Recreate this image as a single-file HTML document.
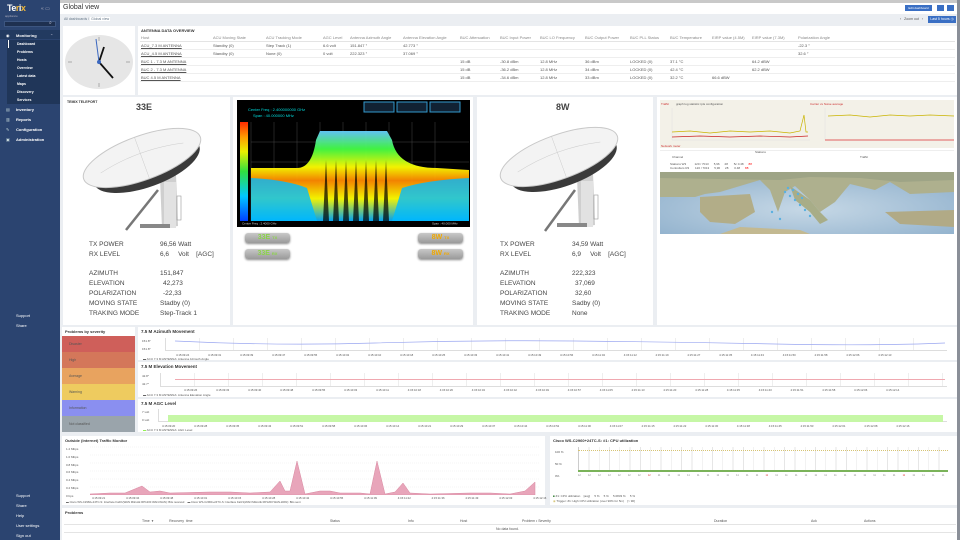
<!DOCTYPE html>
<html><head><meta charset="utf-8"><style>
*{margin:0;padding:0;box-sizing:border-box}
body{width:960px;height:540px;overflow:hidden;background:#ebeef2;font-family:"Liberation Sans",sans-serif;color:#1f2c33;position:relative}
.a{position:absolute}
.p{position:absolute;background:#fff}
.t{position:absolute;font-size:4px;color:#555;white-space:nowrap}
.sb{left:0;top:0;width:60px;height:540px;background:#2b4470}
.nav{position:absolute;left:16px;font-size:4px;color:#fff;font-weight:bold;white-space:nowrap}
.sub{position:absolute;left:7px;width:53px;height:8px;background:#203659;font-size:3.5px;color:#fff;padding:2px 0 0 10px;font-weight:bold}
.lbl{position:absolute;font-size:6.5px;color:#444;white-space:nowrap}
.btn{position:absolute;height:10px;border-radius:3px;background:linear-gradient(#c8c8c8,#9a9a9a);box-shadow:0 1px 2px #888;font-size:7px;font-weight:bold;text-align:center;line-height:10px}
.sev{position:absolute;left:62px;width:73px;height:16px;font-size:3.5px;color:#555;padding:6px 0 0 7px}
.ct{position:absolute;font-size:4.5px;font-weight:bold;color:#333;white-space:nowrap}
</style></head><body>
<div class="a" style="left:0;top:0;width:960px;height:3px;background:#c9c9c9"></div>
<div class="a sb"></div>
<div class="a" style="left:7px;top:3px;font-size:9px;font-weight:bold;color:#fff;letter-spacing:-.5px">Te<span style="color:#f0b83a">r</span>i<span style="color:#f0b83a">x</span></div>
<div class="a" style="left:5px;top:14px;font-size:3px;color:#aab">appliance</div>
<div class="a" style="left:41px;top:6px;font-size:5px;color:#aab">« ▭</div>
<div class="a" style="left:4px;top:21px;width:52px;height:6px;background:#1e3050;border:1px solid #3c5580"></div>
<div class="a" style="left:49px;top:20px;font-size:5px;color:#ccd">⌕</div>
<div class="a" style="left:0;top:30px;width:60px;height:9px;background:#223a60"></div>
<div class="nav" style="top:33px">Monitoring</div><div class="a" style="left:6px;top:33px;font-size:4px;color:#fff">◉</div>
<div class="a" style="left:50px;top:33px;font-size:4px;color:#ccd">⌃</div>
<div class="sub" style="top:40px">Dashboard</div><div class="a" style="left:8px;top:40px;width:1px;height:8px;background:#fff"></div>
<div class="sub" style="top:48px">Problems</div>
<div class="sub" style="top:56px">Hosts</div>
<div class="sub" style="top:64px">Overview</div>
<div class="sub" style="top:72px">Latest data</div>
<div class="sub" style="top:80px">Maps</div>
<div class="sub" style="top:88px">Discovery</div>
<div class="sub" style="top:96px">Services</div>
<div class="nav" style="top:107px">Inventory</div><div class="a" style="left:6px;top:107px;font-size:4px;color:#cdd">▤</div>
<div class="nav" style="top:117px">Reports</div><div class="a" style="left:6px;top:117px;font-size:4px;color:#cdd">▥</div>
<div class="nav" style="top:127px">Configuration</div><div class="a" style="left:6px;top:127px;font-size:4px;color:#cdd">✎</div>
<div class="nav" style="top:137px">Administration</div><div class="a" style="left:6px;top:137px;font-size:4px;color:#cdd">▣</div>
<div class="nav" style="top:313px;font-weight:normal">Support</div>
<div class="nav" style="top:323px;font-weight:normal">Share</div>
<div class="nav" style="top:493px;font-weight:normal">Support</div>
<div class="nav" style="top:503px;font-weight:normal">Share</div>
<div class="nav" style="top:513px;font-weight:normal">Help</div>
<div class="nav" style="top:523px;font-weight:normal">User settings</div>
<div class="nav" style="top:533px;font-weight:normal">Sign out</div>

<div class="a" style="left:60px;top:3px;width:900px;height:11px;background:#fff"></div>
<div class="a" style="left:63px;top:4px;font-size:7px;color:#333">Global view</div>
<div class="a" style="left:905px;top:5px;width:27px;height:6px;background:#3a6fc4;font-size:3px;color:#fff;text-align:center;line-height:6px">Edit dashboard</div>
<div class="a" style="left:937px;top:5px;width:7px;height:6px;background:#3a6fc4"></div>
<div class="a" style="left:947px;top:5px;width:7px;height:6px;background:#3a6fc4"></div>
<div class="a" style="left:64px;top:17px;font-size:3.5px;color:#678">All dashboards / <span style="background:#fff;padding:0 1px">Global view</span></div>
<div class="a" style="left:900px;top:17px;font-size:3.5px;color:#555">‹ &nbsp; Zoom out &nbsp; ›</div>
<div class="a" style="left:928px;top:16px;width:28px;height:7px;background:#3a6fc4;font-size:3.5px;color:#fff;text-align:center;line-height:7px">Last 5 hours ◷</div>

<!-- clock -->
<div class="p" style="left:63px;top:26px;width:72px;height:69px"></div>
<svg class="a" style="left:63px;top:26px" width="72" height="69" viewBox="0 0 72 69">
<ellipse cx="36" cy="36" rx="34" ry="27" fill="#e6e6e6"/>
<g stroke="#aaa" stroke-width="1"><line x1="36" y1="11" x2="36" y2="15"/><line x1="36" y1="57" x2="36" y2="61"/><line x1="5" y1="36" x2="9" y2="36"/><line x1="63" y1="36" x2="67" y2="36"/></g>
<line x1="36" y1="36" x2="33" y2="13" stroke="#3b68c0" stroke-width="1"/>
<line x1="36" y1="36" x2="41" y2="21" stroke="#111" stroke-width="1.8"/>
<line x1="36" y1="36" x2="50" y2="52" stroke="#111" stroke-width="1.8"/>
<circle cx="36" cy="36" r="2" fill="#3b68c0"/></svg>

<!-- table -->
<div class="p" style="left:138px;top:26px;width:820px;height:69px"></div>
<div class="a" style="left:141px;top:28px;font-size:4px;font-weight:bold;color:#333">ANTENNA DATA OVERVIEW</div>
<div class="t" style="left:141px;top:35px;color:#888">Host</div><div class="t" style="left:213px;top:35px;color:#888">ACU Moving State</div><div class="t" style="left:266px;top:35px;color:#888">ACU Tracking Mode</div><div class="t" style="left:323px;top:35px;color:#888">AGC Level</div><div class="t" style="left:350px;top:35px;color:#888">Antenna Azimuth Angle</div><div class="t" style="left:403px;top:35px;color:#888">Antenna Elevation Angle</div><div class="t" style="left:460px;top:35px;color:#888">BUC Attenuation</div><div class="t" style="left:500px;top:35px;color:#888">BUC Input Power</div><div class="t" style="left:540px;top:35px;color:#888">BUC LO Frequency</div><div class="t" style="left:585px;top:35px;color:#888">BUC Output Power</div><div class="t" style="left:630px;top:35px;color:#888">BUC PLL Status</div><div class="t" style="left:670px;top:35px;color:#888">BUC Temperature</div><div class="t" style="left:712px;top:35px;color:#888">EIRP value (4.5M)</div><div class="t" style="left:752px;top:35px;color:#888">EIRP value (7.3M)</div><div class="t" style="left:798px;top:35px;color:#888">Polarization Angle</div>
<div class="a" style="left:140px;top:41px;width:815px;height:1px;background:#e4e4e4"></div>
<div class="a" style="left:140px;top:49px;width:815px;height:1px;background:#eee"></div>
<div class="a" style="left:140px;top:57px;width:815px;height:1px;background:#eee"></div>
<div class="a" style="left:140px;top:65px;width:815px;height:1px;background:#eee"></div>
<div class="a" style="left:140px;top:73px;width:815px;height:1px;background:#eee"></div>
<div class="a" style="left:140px;top:81px;width:815px;height:1px;background:#eee"></div>
<div class="t" style="left:141px;top:43px;text-decoration:underline">ACU_7.3 M ANTENNA</div><div class="t" style="left:213px;top:43px">Standby (0)</div><div class="t" style="left:266px;top:43px">Step Track (1)</div><div class="t" style="left:323px;top:43px">6.6 volt</div><div class="t" style="left:350px;top:43px">151.847 °</div><div class="t" style="left:403px;top:43px">42.773 °</div><div class="t" style="left:798px;top:43px">-22.3 °</div>
<div class="t" style="left:141px;top:51px;text-decoration:underline">ACU_4.5 M ANTENNA</div><div class="t" style="left:213px;top:51px">Standby (0)</div><div class="t" style="left:266px;top:51px">None (0)</div><div class="t" style="left:323px;top:51px">0 volt</div><div class="t" style="left:350px;top:51px">222.323 °</div><div class="t" style="left:403px;top:51px">37.069 °</div><div class="t" style="left:798px;top:51px">32.6 °</div>
<div class="t" style="left:141px;top:59px;text-decoration:underline">BUC 1 - 7.3 M ANTENNA</div><div class="t" style="left:460px;top:59px">15 dB</div><div class="t" style="left:500px;top:59px">-30.8 dBm</div><div class="t" style="left:540px;top:59px">12.8 MHz</div><div class="t" style="left:585px;top:59px">36 dBm</div><div class="t" style="left:630px;top:59px">LOCKED (0)</div><div class="t" style="left:670px;top:59px">37.1 °C</div><div class="t" style="left:752px;top:59px">64.2 dBW</div>
<div class="t" style="left:141px;top:67px;text-decoration:underline">BUC 2 - 7.3 M ANTENNA</div><div class="t" style="left:460px;top:67px">15 dB</div><div class="t" style="left:500px;top:67px">-36.2 dBm</div><div class="t" style="left:540px;top:67px">12.8 MHz</div><div class="t" style="left:585px;top:67px">34 dBm</div><div class="t" style="left:630px;top:67px">LOCKED (0)</div><div class="t" style="left:670px;top:67px">42.4 °C</div><div class="t" style="left:752px;top:67px">62.2 dBW</div>
<div class="t" style="left:141px;top:75px;text-decoration:underline">BUC 4.5 M ANTENNA</div><div class="t" style="left:460px;top:75px">15 dB</div><div class="t" style="left:500px;top:75px">-34.6 dBm</div><div class="t" style="left:540px;top:75px">12.8 MHz</div><div class="t" style="left:585px;top:75px">33 dBm</div><div class="t" style="left:630px;top:75px">LOCKED (0)</div><div class="t" style="left:670px;top:75px">32.2 °C</div><div class="t" style="left:712px;top:75px">66.6 dBW</div>

<!-- 33E -->
<div class="p" style="left:63px;top:97px;width:167px;height:228px"></div>
<div class="a" style="left:67px;top:100px;font-size:3.5px;font-weight:bold;color:#333">TEMIX TELEPORT</div>
<div class="a" style="left:136px;top:102px;font-size:9px;font-weight:bold;color:#444">33E</div>
<svg class="a" style="left:78px;top:118px" width="130" height="117" viewBox="0 0 130 117">
<path d="M80 72 L48 112" stroke="#777" stroke-width="2.5"/>
<path d="M82 60 L98 56 L100 108 L84 110Z" fill="#cfcfcf"/><rect x="86" y="64" width="12" height="46" fill="#e2e2e2"/><rect x="99" y="78" width="4" height="24" fill="none" stroke="#999" stroke-width=".6"/>
<rect x="62" y="106" width="30" height="4" fill="#888"/>
<g transform="rotate(-20 64 40)"><ellipse cx="66" cy="48" rx="56" ry="22" fill="#3a3a3a"/><ellipse cx="64" cy="40" rx="62" ry="22" fill="#f3f3f3" stroke="#c8c8c8"/>
<path d="M20 40 Q64 30 108 40 M64 18 L64 62" stroke="#ccc" stroke-width=".5" fill="none"/></g>
</svg>
<div class="lbl" style="left:89px;top:241px">TX POWER</div><div class="lbl" style="left:160px;top:241px">96,56 Watt</div>
<div class="lbl" style="left:89px;top:251px">RX LEVEL</div><div class="lbl" style="left:160px;top:251px">6,6 &nbsp;&nbsp;&nbsp;&nbsp;Volt &nbsp;&nbsp;&nbsp;[AGC]</div>
<div class="lbl" style="left:89px;top:270px">AZIMUTH</div><div class="lbl" style="left:160px;top:270px">151,847</div>
<div class="lbl" style="left:89px;top:280px">ELEVATION</div><div class="lbl" style="left:163px;top:280px">42,273</div>
<div class="lbl" style="left:89px;top:290px">POLARIZATION</div><div class="lbl" style="left:163px;top:290px">-22,33</div>
<div class="lbl" style="left:89px;top:300px">MOVING STATE</div><div class="lbl" style="left:160px;top:300px">Stadby (0)</div>
<div class="lbl" style="left:89px;top:310px">TRAKING MODE</div><div class="lbl" style="left:160px;top:310px">Step-Track 1</div>

<!-- spectrum -->
<div class="p" style="left:233px;top:97px;width:240px;height:228px"></div>
<svg class="a" style="left:237px;top:100px" width="233" height="127" viewBox="0 0 233 127">
<defs><linearGradient id="sp" x1="0" y1="0" x2="0" y2="1"><stop offset="0" stop-color="#ff2a00"/><stop offset=".15" stop-color="#ff9a00"/><stop offset=".3" stop-color="#e8f000"/><stop offset=".5" stop-color="#30e040"/><stop offset=".75" stop-color="#00c8ff"/><stop offset="1" stop-color="#0040ff"/></linearGradient>
<linearGradient id="sd" x1="0" y1="0" x2="0" y2="1"><stop offset="0" stop-color="#6cf"/><stop offset=".2" stop-color="#4f4"/><stop offset=".4" stop-color="#ff0"/><stop offset=".55" stop-color="#f80"/><stop offset=".75" stop-color="#ff0"/><stop offset="1" stop-color="#0af"/></linearGradient></defs>
<rect width="233" height="127" fill="#000"/>
<text x="11" y="11" font-size="4" fill="#0dd" font-family="Liberation Sans">Center Freq :   2.400000000 GHz</text>
<text x="16" y="17" font-size="4" fill="#0dd" font-family="Liberation Sans">Span :        40.000000 MHz</text>
<rect x="127" y="2" width="30" height="10" fill="#123" stroke="#39c"/><rect x="160" y="2" width="30" height="10" fill="#123" stroke="#39c"/><rect x="193" y="2" width="30" height="10" fill="#123" stroke="#39c"/>
<rect x="3" y="22" width="8" height="99" fill="url(#sp)"/>
<g stroke="#444" stroke-width=".5"><line x1="14" y1="22" x2="14" y2="121"/><line x1="37" y1="22" x2="37" y2="121"/><line x1="60" y1="22" x2="60" y2="121"/><line x1="83" y1="22" x2="83" y2="121"/><line x1="106" y1="22" x2="106" y2="121"/><line x1="129" y1="22" x2="129" y2="121"/><line x1="152" y1="22" x2="152" y2="121"/><line x1="175" y1="22" x2="175" y2="121"/><line x1="198" y1="22" x2="198" y2="121"/><line x1="14" y1="42" x2="232" y2="42"/><line x1="14" y1="62" x2="232" y2="62"/><line x1="14" y1="82" x2="232" y2="82"/><line x1="14" y1="102" x2="232" y2="102"/></g>
<path d="M14 68 L60 68 Q75 68 79 40 L83 31 L150 31 L155 40 Q160 68 200 68 L232 70 L232 121 L14 121Z" fill="url(#sd)" opacity=".95"/>
<path d="M14 78 Q50 80 70 88 L80 121 L14 121Z M232 78 Q190 80 165 88 L155 121 L232 121Z" fill="#0bf" opacity=".8"/>
<g fill="#000" opacity=".7"><path d="M86 121 L89 60 L92 121Z"/><path d="M96 121 L99 60 L102 121Z"/><path d="M106 121 L109 60 L112 121Z"/><path d="M116 121 L119 60 L122 121Z"/><path d="M126 121 L129 60 L132 121Z"/><path d="M136 121 L139 60 L142 121Z"/><path d="M146 121 L149 60 L152 121Z"/></g>
<text x="5" y="124.5" font-size="3" fill="#ccc" font-family="Liberation Sans">Center Freq : 2.4000 GHz</text>
<text x="195" y="124.5" font-size="3" fill="#ccc" font-family="Liberation Sans">Span : 40.000 MHz</text>
</svg>
<div class="btn" style="left:245px;top:233px;width:45px;color:#8bd34a">33E <span style="font-size:4px">TX</span></div>
<div class="btn" style="left:245px;top:249px;width:45px;color:#8bd34a">33E <span style="font-size:4px">RX</span></div>
<div class="btn" style="left:418px;top:233px;width:45px;color:#f0a800">8W <span style="font-size:4px">TX</span></div>
<div class="btn" style="left:418px;top:249px;width:45px;color:#f0a800">8W <span style="font-size:4px">RX</span></div>

<!-- 8W -->
<div class="p" style="left:477px;top:97px;width:176px;height:228px"></div>
<div class="a" style="left:556px;top:102px;font-size:9px;font-weight:bold;color:#444">8W</div>
<svg class="a" style="left:495px;top:115px" width="130" height="120" viewBox="0 0 130 120">
<path d="M80 75 L50 116" stroke="#777" stroke-width="2.5"/>
<path d="M82 62 L98 58 L100 110 L84 112Z" fill="#cfcfcf"/><rect x="86" y="66" width="12" height="46" fill="#e2e2e2"/><rect x="99" y="80" width="4" height="24" fill="none" stroke="#999" stroke-width=".6"/>
<rect x="62" y="108" width="30" height="4" fill="#888"/>
<g transform="rotate(-20 64 42)"><ellipse cx="66" cy="50" rx="56" ry="22" fill="#3a3a3a"/><ellipse cx="64" cy="42" rx="62" ry="22" fill="#f3f3f3" stroke="#c8c8c8"/>
<path d="M20 42 Q64 32 108 42 M64 20 L64 64" stroke="#ccc" stroke-width=".5" fill="none"/></g>
</svg>
<div class="lbl" style="left:500px;top:241px">TX POWER</div><div class="lbl" style="left:572px;top:241px">34,59 Watt</div>
<div class="lbl" style="left:500px;top:251px">RX LEVEL</div><div class="lbl" style="left:572px;top:251px">6,9 &nbsp;&nbsp;&nbsp;&nbsp;Volt &nbsp;&nbsp;&nbsp;[AGC]</div>
<div class="lbl" style="left:500px;top:270px">AZIMUTH</div><div class="lbl" style="left:572px;top:270px">222,323</div>
<div class="lbl" style="left:500px;top:280px">ELEVATION</div><div class="lbl" style="left:575px;top:280px">37,069</div>
<div class="lbl" style="left:500px;top:290px">POLARIZATION</div><div class="lbl" style="left:575px;top:290px">32,60</div>
<div class="lbl" style="left:500px;top:300px">MOVING STATE</div><div class="lbl" style="left:572px;top:300px">Sadby (0)</div>
<div class="lbl" style="left:500px;top:310px">TRAKING MODE</div><div class="lbl" style="left:572px;top:310px">None</div>

<!-- map panel -->
<div class="p" style="left:657px;top:97px;width:301px;height:228px"></div>
<div class="a" style="left:660px;top:100px;width:294px;height:48px;background:#f3f1e8"></div>
<svg class="a" style="left:660px;top:100px" width="294" height="48">
<text x="16" y="5" font-size="3" fill="#555" font-family="Liberation Sans">graph   log   statistic   rpts   configuration</text>
<text x="1" y="5" font-size="3" fill="#c33" font-family="Liberation Sans">Traffic</text>
<text x="150" y="5" font-size="3" fill="#c33" font-family="Liberation Sans">Carrier vs Noise average</text>
<g stroke="#ddd" stroke-width=".4"><line x1="12" y1="8" x2="12" y2="40"/><line x1="12" y1="40" x2="150" y2="40"/><line x1="165" y1="8" x2="165" y2="40"/><line x1="165" y1="40" x2="294" y2="40"/></g>
<polyline points="12,32 30,31 50,33 70,31 90,32 110,31 130,33 140,31 144,15 146,32 148,32" fill="none" stroke="#c9b400" stroke-width=".7"/>
<polyline points="12,37 40,36 70,37 100,36 130,37 148,36" fill="none" stroke="#c22" stroke-width=".7"/>
<polyline points="168,16 190,15 210,17 230,15 250,16 270,15 294,16" fill="none" stroke="#c9b400" stroke-width=".7"/>
<line x1="165" y1="40" x2="294" y2="40" stroke="#d33" stroke-width=".7"/>
<text x="1" y="47" font-size="3" fill="#c33" font-family="Liberation Sans">Network meter</text>
</svg>
<div class="a" style="left:660px;top:150px;width:294px;height:20px;background:#fff;border-top:1px solid #eee"></div>
<div class="t" style="left:672px;top:155px;font-size:3px">Channel</div><div class="t" style="left:755px;top:150px;font-size:3px">Stations</div><div class="t" style="left:860px;top:155px;font-size:3px">Traffic</div>
<div class="t" style="left:670px;top:162px;font-size:3px">Stations W3 &nbsp;&nbsp;&nbsp;&nbsp;&nbsp;&nbsp;&nbsp;&nbsp; 120 / 7013 &nbsp;&nbsp;&nbsp;&nbsp; 5,96 &nbsp;&nbsp;&nbsp;&nbsp; 28 &nbsp;&nbsp;&nbsp;&nbsp;&nbsp; 5c 0.48 &nbsp;&nbsp;&nbsp;&nbsp; <span style="color:red">88</span></div>
<div class="t" style="left:670px;top:166px;font-size:3px">Controllers R3 &nbsp;&nbsp;&nbsp;&nbsp;&nbsp; 120 / 7013 &nbsp;&nbsp;&nbsp;&nbsp; 5,96 &nbsp;&nbsp;&nbsp;&nbsp; 28 &nbsp;&nbsp;&nbsp;&nbsp;&nbsp; 0.48 &nbsp;&nbsp;&nbsp;&nbsp; <span style="color:red">88</span></div>
<svg class="a" style="left:660px;top:172px" width="294" height="62" viewBox="0 0 294 62">
<defs><radialGradient id="sea" cx=".5" cy=".6" r=".7"><stop offset="0" stop-color="#c6d8e6"/><stop offset="1" stop-color="#8fb0cc"/></radialGradient></defs>
<rect width="294" height="62" fill="url(#sea)"/>
<path d="M0 0 L294 0 L294 20 L250 22 L230 10 L215 18 L190 12 L175 30 L160 40 L150 28 L135 14 L125 20 L118 40 L110 18 L100 8 L80 14 L60 20 L45 22 L35 25 L0 25Z" fill="#aeb08e"/>
<path d="M40 25 L90 22 L95 40 L75 52 L50 50 L40 40Z" fill="#b2ad88"/>
<path d="M225 40 L294 38 L294 55 L240 52Z" fill="#b1aa86"/>
<path d="M0 0 L294 0 L294 8 L240 10 L200 6 L150 5 L120 8 L0 6Z" fill="#9ea486"/>
<path d="M60 62 L80 55 L140 58 L150 62Z" fill="#c3b991"/>
<path d="M130 14 L150 28 L160 40 L168 48 L160 52 L150 40 L135 28Z" fill="#a8ad88"/>
<g fill="#5ab0e0"><circle cx="125" cy="20" r="1.2"/><circle cx="130" cy="24" r="1.2"/><circle cx="135" cy="28" r="1.2"/><circle cx="140" cy="33" r="1.2"/><circle cx="145" cy="38" r="1.2"/><circle cx="128" cy="16" r="1.2"/><circle cx="138" cy="22" r="1.2"/><circle cx="150" cy="44" r="1.2"/><circle cx="120" cy="47" r="1.2"/><circle cx="112" cy="40" r="1.2"/><circle cx="133" cy="18" r="1.2"/><circle cx="142" cy="26" r="1.2"/></g>
</svg>

<!-- severity -->
<div class="p" style="left:62px;top:327px;width:73px;height:105px"></div>
<div class="a" style="left:65px;top:329px;font-size:4px;font-weight:bold;color:#333">Problems by severity</div>
<div class="sev" style="top:336px;background:#cf5f5a">Disaster</div>
<div class="sev" style="top:352px;background:#d4775a">High</div>
<div class="sev" style="top:368px;background:#e8a35f">Average</div>
<div class="sev" style="top:384px;background:#eecb5f">Warning</div>
<div class="sev" style="top:400px;background:#8a8ff0">Information</div>
<div class="sev" style="top:416px;height:16px;background:#9aa4ab">Not classified</div>

<!-- charts -->
<div class="p" style="left:138px;top:327px;width:820px;height:33px"></div>
<div class="ct" style="left:141px;top:329px">7.5 M Azimuth Movement</div>
<div class="a" style="left:165px;top:338px;width:782px;height:13px;border-left:1px solid #ddd;border-bottom:1px solid #ddd;background:repeating-linear-gradient(90deg,transparent 0 33px,#eee 33px 34px)"></div>
<svg class="a" style="left:175px;top:338px" width="770" height="13"><path d="M0 3 Q100 8 200 5 T400 3 T600 6 T770 5" fill="none" stroke="#9aa6f0" stroke-width=".7"/></svg>
<div class="t" style="left:142px;top:339px;font-size:3px">151.8°<br><br>151.8°</div>
<div class="t" style="left:176px;top:353px;font-size:2.8px;word-spacing:18px">4:15:09:24 4:15:09:31 4:15:09:39 4:15:09:47 4:15:09:55 4:15:10:02 4:15:10:10 4:15:10:18 4:15:10:25 4:15:10:33 4:15:10:41 4:15:10:49 4:15:10:56 4:15:11:04 4:15:11:12 4:15:11:19 4:15:11:27 4:15:11:35 4:15:11:43 4:15:11:50 4:15:11:58 4:15:12:06 4:15:12:13</div>
<div class="t" style="left:143px;top:357px;font-size:3px">▬ ACU 7.3 M ANTENNA: Antenna Azimuth Angle</div>

<div class="p" style="left:138px;top:362px;width:820px;height:35px"></div>
<div class="ct" style="left:141px;top:364px">7.5 M Elevation Movement</div>
<div class="a" style="left:160px;top:373px;width:787px;height:14px;border-left:1px solid #ddd;border-bottom:1px solid #ddd;background:repeating-linear-gradient(90deg,transparent 0 33px,#eee 33px 34px)"></div>
<div class="a" style="left:175px;top:379px;width:770px;height:1px;background:#f0a8b0"></div>
<div class="t" style="left:142px;top:374px;font-size:3px">42.8°<br><br>42.7°</div>
<div class="t" style="left:184px;top:388px;font-size:2.8px;word-spacing:18px">4:15:09:26 4:15:09:33 4:15:09:40 4:15:09:48 4:15:09:55 4:15:10:03 4:15:10:11 4:15:10:18 4:15:10:26 4:15:10:34 4:15:10:42 4:15:10:49 4:15:10:57 4:15:11:05 4:15:11:13 4:15:11:20 4:15:11:28 4:15:11:35 4:15:11:43 4:15:11:51 4:15:11:58 4:15:12:06 4:15:12:14</div>
<div class="t" style="left:143px;top:393px;font-size:3px">▬ ACU 7.3 M ANTENNA: Antenna Elevation Angle</div>

<div class="p" style="left:138px;top:399px;width:820px;height:33px"></div>
<div class="ct" style="left:141px;top:401px">7.5 M AGC Level</div>
<div class="a" style="left:158px;top:409px;width:789px;height:13px;border-left:1px solid #ddd;border-bottom:1px solid #ddd"></div>
<div class="a" style="left:168px;top:415px;width:775px;height:7px;background:#c6f7a6"></div>
<div class="t" style="left:142px;top:410px;font-size:3px">7 volt<br><br>0 volt</div>
<div class="t" style="left:162px;top:424px;font-size:2.8px;word-spacing:18px">4:15:09:20 4:15:09:28 4:15:09:35 4:15:09:43 4:15:09:51 4:15:09:58 4:15:10:06 4:15:10:14 4:15:10:21 4:15:10:29 4:15:10:37 4:15:10:44 4:15:10:52 4:15:11:00 4:15:11:07 4:15:11:15 4:15:11:22 4:15:11:30 4:15:11:38 4:15:11:45 4:15:11:53 4:15:12:01 4:15:12:08 4:15:12:16</div>
<div class="t" style="left:143px;top:428px;font-size:3px"><span style="color:#8e4">▬</span> ACU 7.3 M ANTENNA: AGC Level</div>

<!-- traffic -->
<div class="p" style="left:62px;top:436px;width:483px;height:69px"></div>
<div class="ct" style="left:65px;top:438px;font-size:4px">Outside (Internet) Traffic Monitor</div>
<div class="t" style="left:66px;top:446px;font-size:3px;line-height:7.8px">1.2 Mbps<br>1.0 Mbps<br>0.8 Mbps<br>0.6 Mbps<br>0.4 Mbps<br>0.2 Mbps<br>0 bps</div>
<svg class="a" style="left:90px;top:445px" width="450" height="50" viewBox="0 0 450 50">
<g stroke="#e4e4e4" stroke-width=".4" stroke-dasharray="1,1"><line x1="0" y1="2" x2="450" y2="2"/><line x1="0" y1="10" x2="450" y2="10"/><line x1="0" y1="18" x2="450" y2="18"/><line x1="0" y1="26" x2="450" y2="26"/><line x1="0" y1="34" x2="450" y2="34"/><line x1="0" y1="42" x2="450" y2="42"/></g>
<path d="M0 49 L20 48 L35 48 L52 41 L60 47 L70 46 L80 48 L120 47 L140 47 L160 48 L180 47 L190 36 L195 46 L200 46 L207 16 L215 49 L220 48 L230 46 L240 46 L250 48 L260 48 L270 48 L280 49 L287 16 L295 49 L305 47 L313 38 L320 48 L340 49 L380 48 L400 48 L420 49 L435 46 L445 37 L445 50 L0 50Z" fill="#e8a5ba" stroke="#d888a0" stroke-width=".5"/>
</svg>
<div class="t" style="left:92px;top:496px;font-size:2.8px;word-spacing:20px">4:15:09:21 4:15:09:34 4:15:09:48 4:15:10:01 4:15:10:15 4:15:10:28 4:15:10:42 4:15:10:55 4:15:11:09 4:15:11:22 4:15:11:36 4:15:11:49 4:15:12:03 4:15:12:16</div>
<div class="t" style="left:66px;top:500px;font-size:2.8px">▬ Cisco WS-C2960+24TC-S: Interface Fa0/1(WAN Mikrotik RP1200 WAN-WAN): Bits received &nbsp;&nbsp; ▬ Cisco WS-C2960+24TC-S: Interface Fa0/1(WAN Mikrotik RP1200 WAN-WAN): Bits sent</div>

<!-- cpu -->
<div class="p" style="left:550px;top:436px;width:408px;height:69px"></div>
<div class="ct" style="left:553px;top:438px;font-size:4px">Cisco WS-C2960+24TC-S: #1: CPU utilization</div>
<div class="t" style="left:555px;top:446px;font-size:3px;line-height:12px">100 %<br>50 %<br>0%</div>
<div class="a" style="left:578px;top:447px;width:370px;height:24px;border-left:1px solid #ccc;background:repeating-linear-gradient(90deg,transparent 0 9.5px,#e6e6e6 9.5px 10.3px)"></div>
<div class="a" style="left:578px;top:450px;width:370px;border-top:1px dotted #d6c373"></div>
<div class="a" style="left:578px;top:470px;width:370px;height:2px;background:#7bb35a"></div>
<div class="t" style="left:578px;top:474px;font-size:2.5px;color:#888;word-spacing:6.5px">12 12 12 12 12 12 12 <span style="color:#d33">12</span> 11 11 11 11 11 11 11 11 11 11 11 <span style="color:#d33">11</span> 11 11 11 11 11 11 11 11 11 11 11 11 11 <span style="color:#d33">11</span> 11 11 11 11</div>
<div class="t" style="left:553px;top:494px;font-size:3px"><span style="color:#2a7a2a">■</span> #1: CPU utilization &nbsp;&nbsp; [avg] &nbsp;&nbsp;&nbsp; 5 % &nbsp;&nbsp;&nbsp; 5 % &nbsp;&nbsp;&nbsp; 5.0833 % &nbsp;&nbsp;&nbsp; 5 %</div>
<div class="t" style="left:553px;top:499px;font-size:3px"><span style="color:#d6c373">◉</span> Trigger: #1: High CPU utilization (over 90% for 5m) &nbsp;&nbsp; [&gt; 90]</div>

<!-- problems -->
<div class="p" style="left:62px;top:508px;width:896px;height:32px"></div>
<div class="ct" style="left:65px;top:510px;font-size:4px">Problems</div>
<div class="t" style="left:142px;top:519px;font-size:3.5px;word-spacing:1px">Time ▾ &nbsp;&nbsp;&nbsp;&nbsp;&nbsp;&nbsp; Recovery time</div>
<div class="t" style="left:330px;top:519px;font-size:3.5px">Status</div><div class="t" style="left:408px;top:519px;font-size:3.5px">Info</div><div class="t" style="left:460px;top:519px;font-size:3.5px">Host</div><div class="t" style="left:522px;top:519px;font-size:3.5px">Problem • Severity</div><div class="t" style="left:714px;top:519px;font-size:3.5px">Duration</div><div class="t" style="left:811px;top:519px;font-size:3.5px">Ack</div><div class="t" style="left:864px;top:519px;font-size:3.5px">Actions</div>
<div class="a" style="left:64px;top:524px;width:892px;height:1px;background:#e4e4e4"></div>
<div class="t" style="left:496px;top:527px;font-size:3.5px">No data found.</div>
<div class="a" style="left:64px;top:532px;width:892px;height:1px;background:#e4e4e4"></div>
<div class="a" style="left:957px;top:0;width:3px;height:540px;background:#8a8f98"></div>
</body></html>
